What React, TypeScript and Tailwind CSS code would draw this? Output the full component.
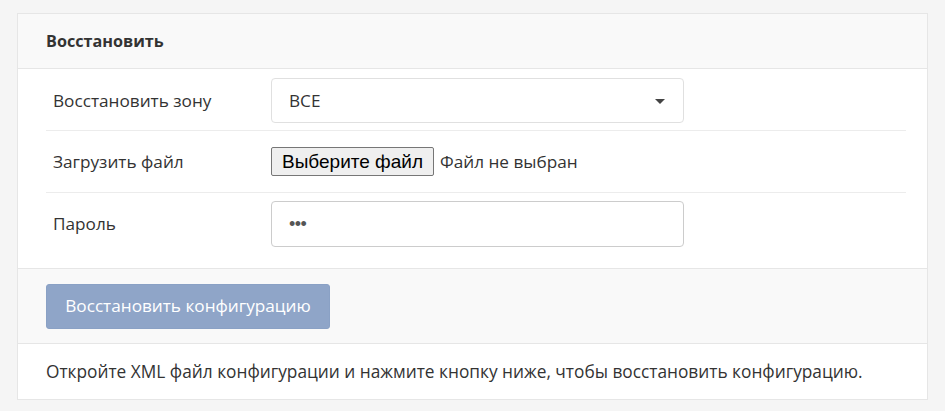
import React from "react";

export default function App() {
  return (
    <div className="min-h-[411px] w-[945px] bg-[#f5f5f5] pt-[13px] pl-[17px] text-[#333] [font-family:'Open_Sans',sans-serif]">
      <div className="w-[911px] border border-[#e6e6e6] bg-white">
        <div className="h-[55px] border-b border-[#e6e6e6] bg-[#f9f9f9] pl-[28px] flex items-center">
          <span className="text-[16.2px] font-bold text-[#333]">Восстановить</span>
        </div>
        <div className="pl-[28px] pr-[21px]">
          <div className="flex h-[62px] items-start border-b border-[#ececec] pt-[9px]">
            <div className="w-[225px] pl-[7px] text-[17.2px] leading-[45px]">Восстановить зону</div>
            <div className="relative flex h-[45px] w-[413px] items-center rounded-[4px] border border-[#e0e0e0] pl-[17px] pr-[18px] text-[17.2px]">
              <span>ВСЕ</span>
              <span className="absolute right-[18px] top-[20px] h-0 w-0 border-x-[5px] border-t-[5px] border-x-transparent border-t-[#444]" />
            </div>
          </div>
          <div className="flex h-[62px] items-center border-b border-[#ececec]">
            <div className="w-[225px] pl-[7px] text-[17.2px]">Загрузить файл</div>
            <div className="flex items-center">
              <button className="h-[29px] rounded-[2px] border border-[#767676] bg-[#efefef] px-[10px] text-[19px] leading-none text-black [font-family:'Liberation_Sans',Arial,sans-serif]">
                Выберите файл
              </button>
              <span className="ml-[6px] text-[17.2px]">Файл не выбран</span>
            </div>
          </div>
          <div className="flex h-[75px] items-start pt-[8px]">
            <div className="w-[225px] pl-[7px] text-[17.2px] leading-[46px]">Пароль</div>
            <div className="flex h-[46px] w-[413px] items-center rounded-[4px] border border-[#cccccc] pl-[17px] text-[18px] tracking-[-0.5px] text-[#555] [font-family:'Liberation_Sans',Arial,sans-serif]">
              •••
            </div>
          </div>
        </div>
        <div className="h-[76px] border-y border-[#e6e6e6] bg-[#f9f9f9] pl-[28px] flex items-center">
          <button className="h-[45px] w-[284px] rounded-[3px] border border-[#8aa1c5] bg-[#8fa5c8] text-[17.2px] text-white">
            Восстановить конфигурацию
          </button>
        </div>
        <div className="flex h-[55px] items-center pl-[28px] text-[17.3px]">
          Откройте XML файл конфигурации и нажмите кнопку ниже, чтобы восстановить конфигурацию.
        </div>
      </div>
    </div>
  );
}
